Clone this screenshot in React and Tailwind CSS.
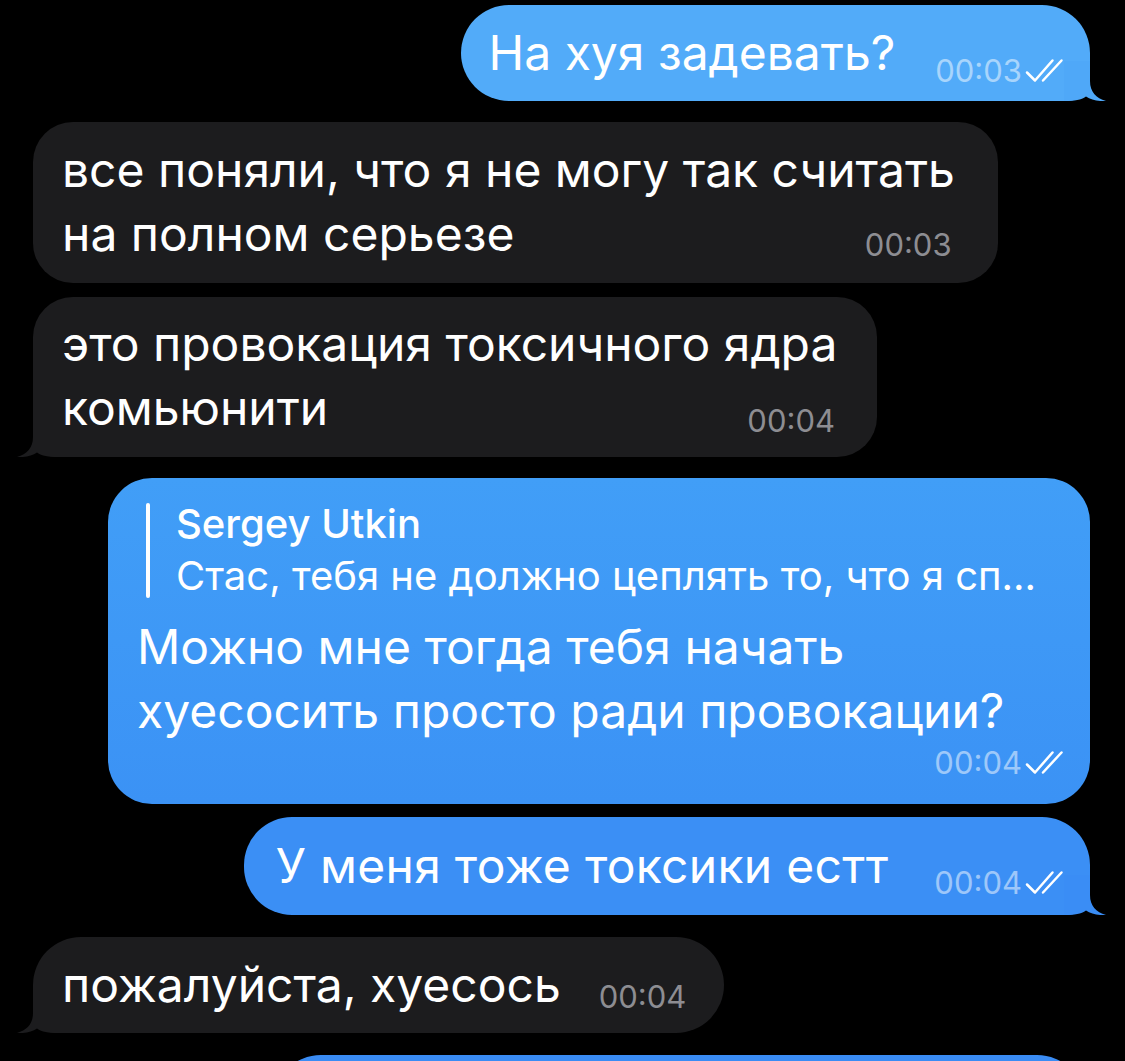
import React from 'react';

const FONT = { fontFamily: 'Inter, "Noto Sans", sans-serif' };

function Checks({ className = '' }) {
  return (
    <svg width="46" height="30" viewBox="0 0 46 30" className={className} fill="none">
      <path d="M3 16.5 L11 24.5 L28.5 4.5" stroke="white" strokeWidth="2.5" strokeLinecap="round" strokeLinejoin="round" />
      <path d="M19 24.5 L37.5 4.5" stroke="white" strokeWidth="2.5" strokeLinecap="round" />
    </svg>
  );
}

function TailRight({ color }) {
  return (
    <svg width="42" height="40" viewBox="0 0 42 40" className="absolute bottom-0 right-[-16px]">
      <path d="M0 0 L26 0 L26 20 C26 31 32 37 42 40 C34 40.5 27 39 22 35.5 C17 39 11 40 0 40 Z" fill={color} />
    </svg>
  );
}

function TailLeft({ color }) {
  return (
    <svg width="42" height="40" viewBox="0 0 42 40" className="absolute bottom-0 left-[-16px]">
      <path d="M42 0 L16 0 L16 20 C16 31 10 37 0 40 C8 40.5 15 39 20 35.5 C25 39 31 40 42 40 Z" fill={color} />
    </svg>
  );
}

function OutTime({ t }) {
  return (
    <span className="flex items-center gap-[2px] text-[31px] leading-none text-white/50">
      {t}
      <Checks />
    </span>
  );
}

function InTime({ t }) {
  return <span className="text-[31px] leading-none text-[#8d8d92]">{t}</span>;
}

export default function App() {
  return (
    <div className="w-[1125px] h-[1061px] overflow-hidden bg-black text-white" style={FONT}>
      <div className="flex flex-col pt-[5px]">
        {/* outgoing 1 */}
        <div className="flex justify-end pr-[35px]">
          <div className="relative flex items-end h-[96px] pl-[28px] pr-[20px] rounded-[48px] rounded-br-[22px] bg-[#52abf9]">
            <span className="text-[48px] leading-[64px] mb-[16px]">На хуя задевать?</span>
            <span className="ml-[40px] mb-[15px]"><OutTime t="00:03" /></span>
            <TailRight color="#4fa8f8" />
          </div>
        </div>

        {/* incoming 2 */}
        <div className="flex pl-[33px] mt-[21px]">
          <div className="flex items-end h-[161px] pl-[29px] pr-[46px] pt-[16px] rounded-[40px] bg-[#1c1c1e]">
            <div className="text-[48px] leading-[64px] mb-[17px]">
              <div>все поняли, что я не могу так считать</div>
              <div>на полном серьезе</div>
            </div>
            <span className="ml-[-90px] mb-[21px]"><InTime t="00:03" /></span>
          </div>
        </div>

        {/* incoming 3 */}
        <div className="flex pl-[33px] mt-[14px]">
          <div className="relative flex items-end h-[160px] pl-[29px] pr-[42px] rounded-[40px] rounded-bl-[22px] bg-[#1c1c1e]">
            <div className="text-[48px] leading-[64px] mb-[17px]">
              <div>это провокация токсичного ядра</div>
              <div>комьюнити</div>
            </div>
            <span className="ml-[-90px] mb-[19px]"><InTime t="00:04" /></span>
            <TailLeft color="#1c1c1e" />
          </div>
        </div>

        {/* outgoing reply 4 */}
        <div className="flex justify-end pr-[35px] mt-[21px]">
          <div className="w-[982px] h-[326px] pl-[29px] pr-[20px] pt-[25px] rounded-[44px] bg-gradient-to-b from-[#419ef7] to-[#3b92f5]">
            <div className="flex pl-[9px]">
              <div className="w-[4px] h-[95px] rounded-full bg-white" />
              <div className="pl-[26px]">
                <div className="text-[40px] leading-[42px] font-medium">Sergey Utkin</div>
                <div className="text-[40px] leading-[62px]">Стас, тебя не должно цеплять то, что я сп...</div>
              </div>
            </div>
            <div className="mt-[8px] text-[48px] leading-[64px]">
              <div>Можно мне тогда тебя начать</div>
              <div>хуесосить просто ради провокации?</div>
            </div>
            <div className="flex justify-end mt-[4px]">
              <OutTime t="00:04" />
            </div>
          </div>
        </div>

        {/* outgoing 5 */}
        <div className="flex justify-end pr-[35px] mt-[13px]">
          <div className="relative flex items-end h-[98px] pl-[32px] pr-[20px] rounded-[48px] rounded-br-[22px] bg-[#3b8ff5]">
            <span className="text-[48px] leading-[64px] mb-[17px] tracking-[0.3px]">У меня тоже токсики естт</span>
            <span className="ml-[46px] mb-[17px]"><OutTime t="00:04" /></span>
            <TailRight color="#3a8df5" />
          </div>
        </div>

        {/* incoming 6 */}
        <div className="flex pl-[33px] mt-[22px]">
          <div className="relative flex items-end h-[96px] pl-[29px] pr-[38px] rounded-[48px] rounded-bl-[22px] bg-[#1c1c1e]">
            <span className="text-[48px] leading-[64px] mb-[16px]">пожалуйста, хуесось</span>
            <span className="ml-[38px] mb-[19px]"><InTime t="00:04" /></span>
            <TailLeft color="#1c1c1e" />
          </div>
        </div>

        {/* outgoing 7 (cut off) */}
        <div className="flex justify-end pr-[40px] mt-[22px]">
          <div className="w-[812px] h-[96px] rounded-[48px] bg-[#3a8cf4]" />
        </div>
      </div>
    </div>
  );
}
